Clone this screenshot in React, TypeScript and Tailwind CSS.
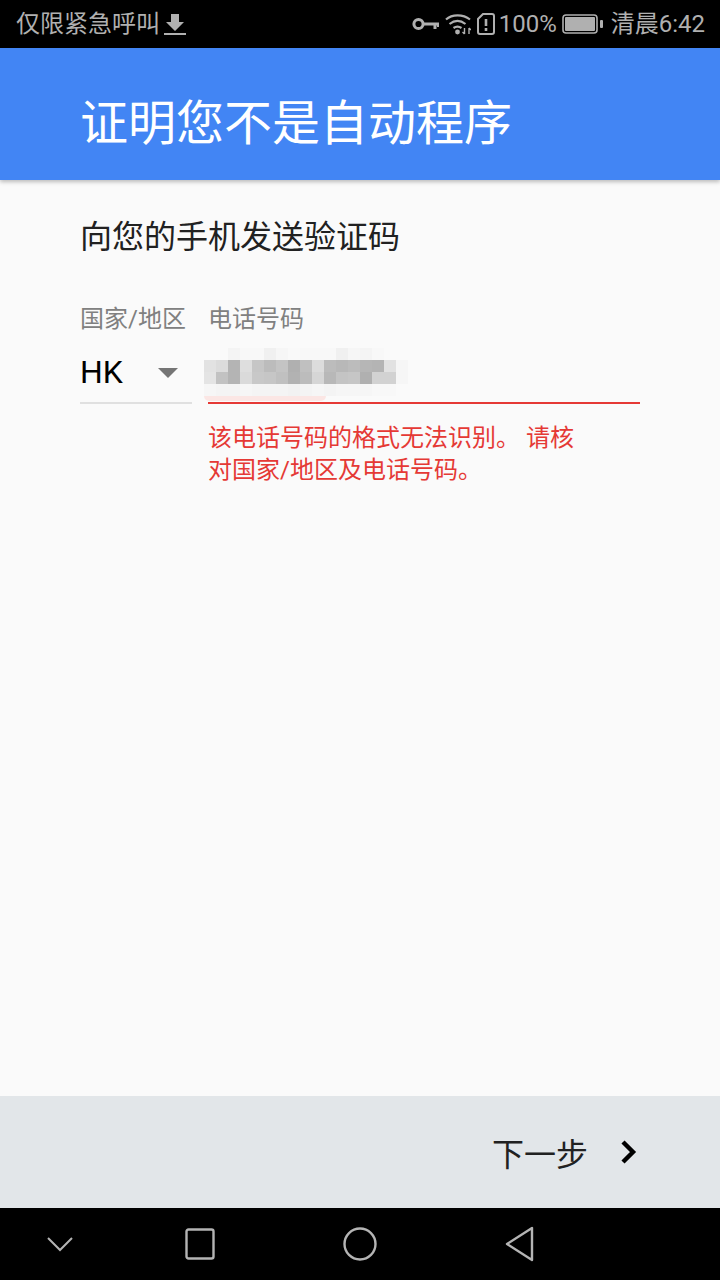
const mosaic = [
  ["#fafafa", "#fafafa", "#f4f4f4", "#f8f8f8", "#f8f8f8", "#f0f0f0", "#f6f6f6", "#f9f9f9", "#f8f8f8", "#f8f8f8", "#f8f8f8", "#f0f0f0", "#f6f6f6", "#f4f4f4", "#f8f8f8", "#fafafa", "#fafafa", "#fafafa"],
  ["#e2e2e2", "#dcdcdc", "#b4b4b4", "#dedede", "#c6c6c6", "#bcbcbc", "#c4c4c4", "#b0b0b0", "#c0c0c0", "#dcdcdc", "#bcbcbc", "#b8b8b8", "#bcbcbc", "#b6b6b6", "#b4b4b4", "#e2e2e2", "#f6f6f6", "#fafafa"],
  ["#e4e4e4", "#c2c2c2", "#b4b4b4", "#dadada", "#c8c8c8", "#c6c6c6", "#c0c0c0", "#b2b2b2", "#bcbcbc", "#d6d6d6", "#b8b8b8", "#c4c4c4", "#c6c6c6", "#b0b0b0", "#d2d2d2", "#d2d2d2", "#f6f6f6", "#fafafa"],
  ["#f6f6f6", "#f4f4f4", "#f4f4f4", "#f6f6f6", "#f4f4f4", "#f4f4f4", "#f4f4f4", "#f2f2f2", "#f4f4f4", "#f6f6f6", "#f4f4f4", "#f6f6f6", "#f6f6f6", "#f6f6f6", "#f8f8f8", "#f8f8f8", "#fafafa", "#fafafa"],
];

function StatusIcons() {
  return (
    <>
      <svg width="27" height="14" viewBox="0 0 27 14" fill="none" stroke="#b0b0b0" strokeWidth="3">
        <circle cx="6.5" cy="7" r="4.6" />
        <path d="M11 7h16M23 7v5" />
        <path d="M26 7v3" strokeWidth="2" />
      </svg>
      <svg width="26" height="22" viewBox="0 0 26 22" fill="none" stroke="#b0b0b0" strokeWidth="2.2" className="ml-[6px]">
        <path d="M1 6.5C7 1 18 1 25 6.5M4.5 11c5-4 11-4 16 0M8.5 15c3-2.2 5-2.2 8 0" />
        <circle cx="12.5" cy="19" r="2.4" fill="#b0b0b0" stroke="none" />
        <path d="M19.5 15v6M17.5 19l2 2M24 15v6M24 15l2 2" strokeWidth="1.4" />
      </svg>
      <svg width="18" height="22" viewBox="0 0 18 22" fill="none" stroke="#b0b0b0" strokeWidth="2" className="ml-[6px]">
        <path d="M6 1h9a2 2 0 0 1 2 2v16a2 2 0 0 1-2 2H3a2 2 0 0 1-2-2V6z" />
        <path d="M9 6v7M9 15v3" strokeWidth="2.6" />
      </svg>
      <span className="ml-[4px] text-[24px] text-[#b0b0b0]">100%</span>
      <svg width="41" height="20" viewBox="0 0 41 20" className="ml-[5px]">
        <rect x="1" y="1" width="34" height="18" rx="3" fill="none" stroke="#b0b0b0" strokeWidth="1.6" />
        <rect x="3" y="3" width="30" height="14" rx="1" fill="#b0b0b0" />
        <rect x="38" y="6" width="3" height="8" rx="1" fill="#b0b0b0" />
      </svg>
      <span className="ml-[8px] text-[24px] text-[#b0b0b0]">清晨6:42</span>
    </>
  );
}

export default function App() {
  return (
    <div className="flex h-[1280px] w-[720px] flex-col bg-[#fafafa] font-['Roboto','Noto_Sans_CJK_SC',sans-serif]">
      {/* status bar */}
      <div className="flex h-12 shrink-0 items-center justify-between bg-black pl-4 pr-[15px]">
        <div className="flex items-center">
          <span className="text-[24px] text-[#b0b0b0]">仅限紧急呼叫</span>
          <svg width="22" height="24" viewBox="0 0 22 24" className="ml-[4px]" fill="#b0b0b0">
            <path d="M7 2h8v8h5l-9 9-9-9h5z" />
            <rect x="0" y="21" width="22" height="2" />
          </svg>
        </div>
        <div className="flex items-center">
          <StatusIcons />
        </div>
      </div>

      {/* header */}
      <div className="z-10 flex h-[132px] shrink-0 items-center bg-[#4285f4] pl-[80px] pt-[20px] shadow-[0_2px_4px_rgba(0,0,0,0.25)]">
        <h1 className="text-[48px] font-normal leading-none text-white">证明您不是自动程序</h1>
      </div>

      {/* form */}
      <div className="flex-1 px-[80px] pt-[37px]">
        <p className="text-[32px] leading-[40px] text-[#212121]">向您的手机发送验证码</p>
        <div className="mt-[46px] flex">
          <div className="w-[112px]">
            <p className="text-[24px] leading-[32px] whitespace-nowrap text-[#808080]">国家/地区</p>
            <div className="mt-[6px] flex h-[63px] items-start border-b-2 border-[#e0e0e0] pt-[11px]">
              <span className="text-[32px] leading-[40px] text-black">HK</span>
              <svg width="20" height="10" viewBox="0 0 20 10" className="ml-[35px] mt-[16px]" fill="#757575">
                <path d="M0 0h20L10 10z" />
              </svg>
            </div>
          </div>
          <div className="ml-4 flex-1">
            <p className="text-[24px] leading-[32px] text-[#808080]">电话号码</p>
            <div className="mt-[6px] h-[63px] border-b-2 border-[#e53935] pt-[7px]">
              <div className="-ml-1 grid w-[216px] grid-cols-[repeat(18,12px)] grid-rows-[repeat(4,12px)]">
                {mosaic.flat().map((c, i) => (
                  <div key={i} style={{ backgroundColor: c }} />
                ))}
              </div>
              <div className="-ml-1 h-[5px] w-[122px] rounded-b-full bg-[#fbe6e4]" />
            </div>
            <p className="mt-[18px] w-[380px] text-[24px] leading-[32px] text-[#e53935]">该电话号码的格式无法识别。 请核对国家/地区及电话号码。</p>
          </div>
        </div>
      </div>

      {/* footer */}
      <div className="flex h-[112px] shrink-0 items-center justify-end bg-[#e2e6e9] pr-[82px]">
        <span className="pt-[6px] text-[32px] text-[#212121]">下一步</span>
        <svg width="18" height="26" viewBox="0 0 18 26" className="ml-[32px]" fill="none" stroke="#000" strokeWidth="4.4">
          <path d="M3 3l10 10L3 23" />
        </svg>
      </div>

      {/* nav bar */}
      <div className="flex h-[72px] shrink-0 items-center bg-black">
        <div className="flex w-[120px] justify-center">
          <svg width="28" height="18" viewBox="0 0 28 18" fill="none" stroke="#b4b4b4" strokeWidth="2">
            <path d="M2 3l12 12L26 3" />
          </svg>
        </div>
        <div className="flex w-[160px] justify-center">
          <svg width="30" height="32" viewBox="0 0 30 32" fill="none" stroke="#b4b4b4" strokeWidth="2.4">
            <rect x="1.5" y="1.5" width="27" height="29" rx="2" />
          </svg>
        </div>
        <div className="flex w-[160px] justify-center">
          <svg width="34" height="34" viewBox="0 0 34 34" fill="none" stroke="#b4b4b4" strokeWidth="2.4">
            <circle cx="17" cy="17" r="15.5" />
          </svg>
        </div>
        <div className="flex w-[160px] justify-center">
          <svg width="30" height="36" viewBox="0 0 30 36" fill="none" stroke="#b4b4b4" strokeWidth="2.4" strokeLinejoin="round">
            <path d="M27 2v32L2 18z" />
          </svg>
        </div>
      </div>
    </div>
  );
}
